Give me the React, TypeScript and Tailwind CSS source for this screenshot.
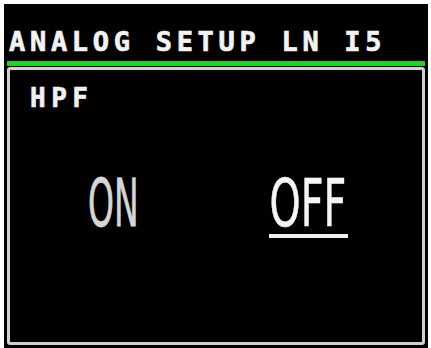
import React from 'react';

const pixel = { fontFamily: '"DejaVu Sans Mono", "Liberation Mono", monospace' };
const tall = { fontFamily: '"DejaVu Sans", "Liberation Sans", sans-serif' };

export default function App() {
  return (
    <div className="w-[431px] h-[348px] bg-white pt-[4px] pl-[4px] pr-[3px] overflow-hidden">
      <div className="bg-black h-full flex flex-col">
        {/* title bar */}
        <div
          className="h-[57px] pl-[5px] pt-[24px] text-[27px] leading-none font-bold tracking-[4.7px] text-[#f2f2f2] whitespace-nowrap [-webkit-text-stroke:0.7px_#f2f2f2]"
          style={pixel}
        >
          ANALOG SETUP LN I5
        </div>
        <div className="mx-[3px] h-[5px] bg-[#1fd41f]" />

        {/* HPF panel */}
        <div className="mx-[3px] mt-[1px] mb-[3px] flex-1 border-[3px] border-[#cfcfcf] rounded-[3px] flex flex-col">
          <div
            className="pl-[20px] pt-[15px] text-[26px] leading-none font-bold tracking-[5.5px] text-[#f0f0f0] [-webkit-text-stroke:0.6px_#f0f0f0]"
            style={pixel}
          >
            HPF
          </div>

          <div className="flex mt-[60px]">
            <div className="w-[78px]" />
            <div className="w-[49px]">
              <span
                className="block whitespace-nowrap text-[66px] leading-none origin-left scale-x-[0.5] text-[#d6d6d6] [-webkit-text-stroke:0.8px_#d6d6d6]"
                style={tall}
              >
                ON
              </span>
            </div>
            <div className="w-[132px]" />
            <div className="w-[80px] flex flex-col">
              <span
                className="block pl-[1px] whitespace-nowrap text-[66px] leading-none origin-left scale-x-[0.6] text-[#f5f5f5] [-webkit-text-stroke:0.6px_#f5f5f5]"
                style={tall}
              >
                OFF
              </span>
              <div className="-mt-[3px] h-[4px] w-[79px] bg-[#f0f0f0]" />
            </div>
          </div>
        </div>
      </div>
    </div>
  );
}
